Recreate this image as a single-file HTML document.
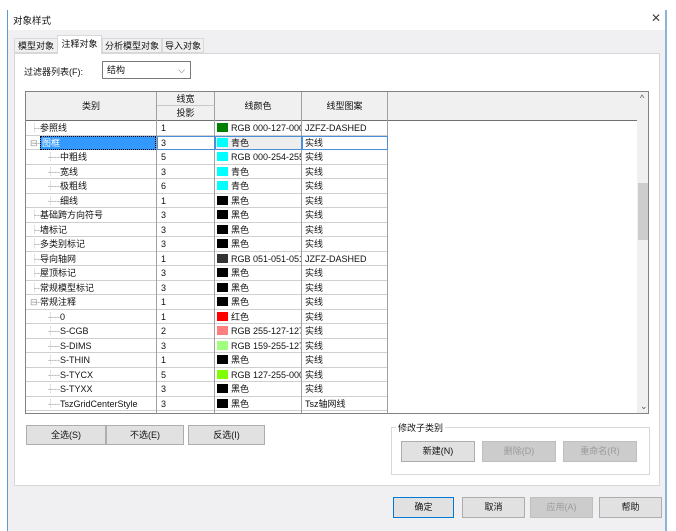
<!DOCTYPE html>
<html><head><meta charset="utf-8"><style>
*{box-sizing:border-box;margin:0;padding:0}
body{width:676px;height:531px;background:#fff;font-family:"Liberation Sans","Noto Sans CJK SC",sans-serif;font-size:9px;color:#111;position:relative;overflow:hidden}
.a{position:absolute}
.btn{position:absolute;background:#e1e1e1;border:1px solid #adadad;text-align:center;line-height:18px;font-size:9px}
.dis{color:#9a9a9a;background:#ccc;border-color:#bfbfbf}
.row{position:absolute;left:0;height:14.5px;width:362px;border-bottom:1px solid #cfcfcf;line-height:14px}
.c{position:absolute;top:0;height:14.5px;border-right:1px solid #a0a0a0;white-space:nowrap;overflow:hidden}
.sw{display:inline-block;width:11px;height:9px;vertical-align:-1px;margin:0 3px 0 2px}
.tr{color:#999}
</style></head><body>
<div class="a" style="left:7px;top:10px;width:660px;height:521px;background:#f0f0f2;border-left:1px solid #5b9bd5;border-right:2px solid #8ab4dc"></div>
<div class="a" style="left:8px;top:10px;width:657px;height:20px;background:#fff"></div>
<div class="a" style="left:13px;top:13px;font-size:9.5px">对象样式</div>
<div class="a" style="left:651px;top:11px;font-size:12px;color:#444">✕</div>
<!-- tabs -->
<div class="a" style="left:14px;top:38px;width:44px;height:15px;border:1px solid #d8d8d8;background:#f0f0f0;line-height:14px;text-align:center">模型对象</div>
<div class="a" style="left:57px;top:35px;width:45px;height:19px;border:1px solid #d8d8d8;border-bottom:none;background:#fff;line-height:17px;text-align:center;z-index:2">注释对象</div>
<div class="a" style="left:102px;top:38px;width:60px;height:15px;border:1px solid #d8d8d8;background:#f0f0f0;line-height:14px;text-align:center">分析模型对象</div>
<div class="a" style="left:162px;top:38px;width:42px;height:15px;border:1px solid #d8d8d8;background:#f0f0f0;line-height:14px;text-align:center">导入对象</div>
<div class="a" style="left:14px;top:53px;width:646px;height:433px;background:#fff;border:1px solid #d8d8d8"></div>
<div class="a" style="left:24px;top:65px">过滤器列表(F):</div>
<div class="a" style="left:102px;top:61px;width:89px;height:18px;border:1px solid #7a7a7a;background:#fff;padding-left:4px;line-height:16px">结构<span style="position:absolute;right:5px;color:#555">⌵</span></div>
<!-- grid -->
<div class="a" style="left:25px;top:91px;width:624px;height:323px;border:1px solid #828282;background:#fff;overflow:hidden">
 <div class="a" style="left:0;top:0;width:611px;height:29px;background:#f0f0f0;border-bottom:1px solid #707070"></div>
 <div class="a" style="left:0;top:0;width:131px;height:29px;border-right:1px solid #a0a0a0;text-align:center;line-height:29px">类别</div>
 <div class="a" style="left:131px;top:0;width:58px;height:14px;border-right:1px solid #a0a0a0;border-bottom:1px solid #c8c8c8;text-align:center;line-height:14px">线宽</div>
 <div class="a" style="left:131px;top:14px;width:58px;height:15px;border-right:1px solid #a0a0a0;text-align:center;line-height:15px">投影</div>
 <div class="a" style="left:189px;top:0;width:87px;height:29px;border-right:1px solid #a0a0a0;text-align:center;line-height:29px">线颜色</div>
 <div class="a" style="left:276px;top:0;width:86px;height:29px;border-right:1px solid #a0a0a0;text-align:center;line-height:29px">线型图案</div>
 <div class="a" style="left:611px;top:0;width:12px;height:323px;background:#f0f0f0"></div>
 <div class="a" style="left:614px;top:1px;font-size:9px;color:#555">^</div>
 <div class="a" style="left:612px;top:91px;width:10px;height:57px;background:#cdcdcd"></div>
 <div class="a" style="left:614px;top:309px;font-size:9px;color:#555">⌄</div>
 <div id="rows" class="a" style="left:0;top:29px;width:362px"></div>
</div>
<script>
var R=[
[0,"参照线","1","#007f00","RGB 000-127-000","JZFZ-DASHED"],
[0,"图框","3","#00ffff","青色","实线",1],
[1,"中粗线","5","#00fefe","RGB 000-254-255","实线"],
[1,"宽线","3","#00ffff","青色","实线"],
[1,"极粗线","6","#00ffff","青色","实线"],
[1,"细线","1","#000","黑色","实线"],
[0,"基础跨方向符号","3","#000","黑色","实线"],
[0,"墙标记","3","#000","黑色","实线"],
[0,"多类别标记","3","#000","黑色","实线"],
[0,"导向轴网","1","#333","RGB 051-051-051","JZFZ-DASHED"],
[0,"屋顶标记","3","#000","黑色","实线"],
[0,"常规模型标记","3","#000","黑色","实线"],
[0,"常规注释","1","#000","黑色","实线",2],
[1,"0","1","#f00","红色","实线"],
[1,"S-CGB","2","#ff7f7f","RGB 255-127-127","实线"],
[1,"S-DIMS","3","#9fff7f","RGB 159-255-127","实线"],
[1,"S-THIN","1","#000","黑色","实线"],
[1,"S-TYCX","5","#7fff00","RGB 127-255-000","实线"],
[1,"S-TYXX","3","#000","黑色","实线"],
[1,"TszGridCenterStyle","3","#000","黑色","Tsz轴网线"],
[1,"","","#888","","实线"]];
var h="";
R.forEach(function(r,i){
 var ind=r[0]?34:14;
 var pre=r[0]?'<span class="tr" style="position:absolute;left:20px">┊</span><span class="tr" style="position:absolute;left:22px">----</span>':'<span class="tr" style="position:absolute;left:4px">'+(r[6]?'⊟':'┊')+'</span><span class="tr" style="position:absolute;left:8px">---</span>';
 var sel=r[6]==1;
 h+='<div class="row" style="top:'+(i*14.5)+'px">'+
 '<div class="c" style="left:0;width:131px">'+pre+'<span style="position:absolute;left:'+ind+'px;'+(sel?'right:0;top:0;height:14px;background:#3399ff;color:#fff;padding:0 2px;outline:1px dotted #000;outline-offset:-1px':'')+'">'+r[1]+'</span></div>'+
 '<div class="c" style="left:131px;width:58px;padding-left:4px;'+(sel?'outline:1px solid #4a90d9;outline-offset:-1px':'')+'">'+r[2]+'</div>'+
 '<div class="c" style="left:189px;width:87px;'+(sel?'background:#eee;outline:1px solid #4a90d9;outline-offset:-1px':'')+'"><span class="sw" style="background:'+r[3]+'"></span>'+r[4]+'</div>'+
 '<div class="c" style="left:276px;width:86px;padding-left:3px;'+(sel?'outline:1px solid #4a90d9;outline-offset:-1px':'')+'">'+r[5]+'</div></div>';
});
document.getElementById("rows").innerHTML=h;
</script>
<div class="btn" style="left:26px;top:425px;width:80px;height:20px">全选(S)</div>
<div class="btn" style="left:106px;top:425px;width:78px;height:20px">不选(E)</div>
<div class="btn" style="left:188px;top:425px;width:77px;height:20px">反选(I)</div>
<div class="a" style="left:391px;top:427px;width:259px;height:48px;border:1px solid #d8d8d8"></div>
<div class="a" style="left:396px;top:421px;background:#fff;padding:0 2px">修改子类别</div>
<div class="btn" style="left:401px;top:441px;width:74px;height:21px;line-height:19px">新建(N)</div>
<div class="btn dis" style="left:482px;top:441px;width:74px;height:21px;line-height:19px">删除(D)</div>
<div class="btn dis" style="left:563px;top:441px;width:74px;height:21px;line-height:19px">重命名(R)</div>
<div class="btn" style="left:393px;top:497px;width:61px;height:21px;border:1px solid #0078d7;line-height:19px">确定</div>
<div class="btn" style="left:462px;top:497px;width:63px;height:21px;line-height:19px">取消</div>
<div class="btn dis" style="left:530px;top:497px;width:63px;height:21px;line-height:19px">应用(A)</div>
<div class="btn" style="left:599px;top:497px;width:63px;height:21px;line-height:19px">帮助</div>
</body></html>
